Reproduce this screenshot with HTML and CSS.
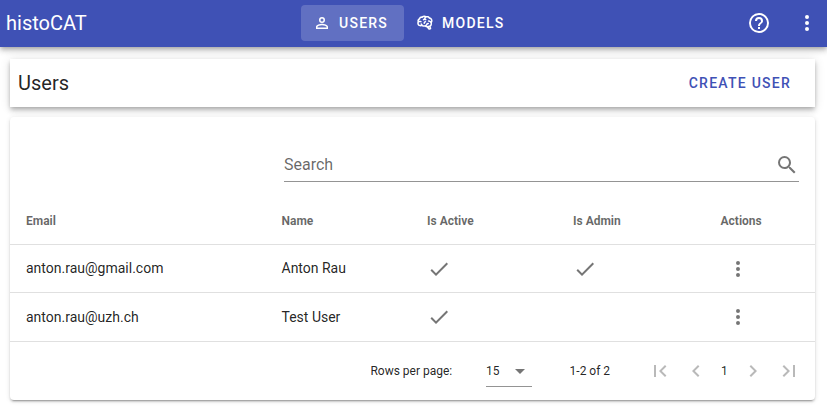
FILE: index.html
```html
<!DOCTYPE html>
<html lang="en">
<head>
<meta charset="utf-8">
<title>histoCAT</title>
<link rel="stylesheet" href="styles.css">
</head>
<body>
<svg width="0" height="0" class="defs">
  <symbol id="check" viewBox="0 0 24 24"><path d="M21,7L9,19L3.5,13.5L4.91,12.09L9,16.17L19.59,5.59L21,7Z"/></symbol>
  <symbol id="dots" viewBox="0 0 24 24"><path d="M12,16A2,2 0 0,1 14,18A2,2 0 0,1 12,20A2,2 0 0,1 10,18A2,2 0 0,1 12,16M12,10A2,2 0 0,1 14,12A2,2 0 0,1 12,14A2,2 0 0,1 10,12A2,2 0 0,1 12,10M12,4A2,2 0 0,1 14,6A2,2 0 0,1 12,8A2,2 0 0,1 10,6A2,2 0 0,1 12,4Z"/></symbol>
</svg>
<header class="app-bar">
  <div class="brand">histoCAT</div>
  <nav class="nav">
    <a class="btn nav-btn active"><svg class="icon small" viewBox="0 0 24 24"><path d="M12,4A4,4 0 0,1 16,8A4,4 0 0,1 12,12A4,4 0 0,1 8,8A4,4 0 0,1 12,4M12,6A2,2 0 0,0 10,8A2,2 0 0,0 12,10A2,2 0 0,0 14,8A2,2 0 0,0 12,6M12,13C14.67,13 20,14.33 20,17V20H4V17C4,14.33 9.33,13 12,13M12,14.9C9.03,14.9 5.9,16.36 5.9,17V18.1H18.1V17C18.1,16.36 14.97,14.9 12,14.9Z"/></svg><span>USERS</span></a>
    <a class="btn nav-btn"><svg class="icon small" viewBox="0 0 24 24"><path d="M21.33,12.91C21.42,14.46 20.71,15.95 19.44,16.86L20.21,18.35C20.44,18.8 20.47,19.33 20.27,19.8C20.08,20.27 19.69,20.64 19.21,20.8L18.42,21.05C18.25,21.11 18.06,21.14 17.88,21.14C17.37,21.14 16.89,20.91 16.56,20.5L14.44,18C13.55,17.85 12.71,17.47 12,16.9C11.5,17.05 11,17.13 10.5,17.13C9.62,17.13 8.74,16.86 8,16.34C7.47,16.5 6.93,16.57 6.38,16.56C5.59,16.57 4.81,16.41 4.08,16.11C2.65,15.47 1.7,14.07 1.65,12.5C1.57,11.78 1.69,11.05 2,10.39C1.71,9.64 1.68,8.82 1.93,8.06C2.3,7.11 3,6.32 3.87,5.82C4.45,4.13 6.08,3 7.87,3.12C9.47,1.62 11.92,1.46 13.7,2.75C14.12,2.64 14.56,2.58 15,2.58C16.36,2.55 17.65,3.15 18.5,4.22C20.54,4.75 22,6.57 22.08,8.69C22.13,9.8 21.83,10.89 21.22,11.82C21.29,12.18 21.33,12.54 21.33,12.91M16.33,11.5C16.9,11.57 17.35,12 17.35,12.57A1,1 0 0,1 16.35,13.57H15.72C15.4,14.47 14.84,15.26 14.1,15.86C14.35,15.95 14.61,16 14.87,16.07C20,16 19.4,12.87 19.4,12.82C19.34,11.39 18.14,10.27 16.71,10.33A1,1 0 0,1 15.71,9.33A1,1 0 0,1 16.71,8.33C17.94,8.36 19.12,8.82 20.04,9.63C20.09,9.34 20.12,9.04 20.12,8.74C20.06,7.5 19.5,6.42 17.25,6.21C16,3.25 12.85,4.89 12.85,5.81V5.81C12.82,6.04 13.06,6.53 13.1,6.56A1,1 0 0,1 14.1,7.56C14.1,8.11 13.65,8.56 13.1,8.56V8.56C12.57,8.54 12.07,8.34 11.67,8C11.19,8.31 10.64,8.5 10.07,8.56V8.56C9.5,8.61 9.03,8.21 9,7.66C8.92,7.1 9.33,6.61 9.88,6.56C10.04,6.54 10.82,6.42 10.82,5.79V5.79C10.82,5.13 11.07,4.5 11.5,4C10.58,3.75 9.59,4.08 8.59,5.29C6.75,5 6,5.25 5.45,7.2C4.5,7.67 4,8 3.78,9C4.86,8.78 5.97,8.87 7,9.25C7.5,9.44 7.78,10 7.59,10.54C7.4,11.06 6.82,11.32 6.3,11.13C5.57,10.81 4.75,10.79 4,11.07C3.68,11.34 3.68,11.9 3.68,12.34C3.68,13.08 4.05,13.77 4.68,14.17C5.21,14.44 5.8,14.58 6.39,14.57C6.24,14.31 6.11,14.04 6,13.76C5.81,13.22 6.1,12.63 6.64,12.44C7.18,12.25 7.77,12.54 7.96,13.08C8.36,14.22 9.38,15 10.58,15.13C11.95,15.06 13.17,14.25 13.77,13C14,11.62 15.11,11.5 16.33,11.5M18.33,18.97L17.71,17.67L17,17.83L18,19.08L18.33,18.97M13.68,10.36C13.7,9.83 13.3,9.38 12.77,9.33C12.06,9.29 11.37,9.53 10.84,10C10.27,10.58 9.97,11.38 10,12.19A1,1 0 0,0 11,13.19C11.57,13.19 12,12.74 12,12.19C12,11.92 12.07,11.65 12.23,11.43C12.35,11.33 12.5,11.28 12.66,11.28C13.21,11.31 13.68,10.9 13.68,10.36Z"/></svg><span>MODELS</span></a>
  </nav>
  <div class="tools">
    <svg class="icon" viewBox="0 0 24 24"><path d="M11,18H13V16H11V18M12,2A10,10 0 0,0 2,12A10,10 0 0,0 12,22A10,10 0 0,0 22,12A10,10 0 0,0 12,2M12,20C7.59,20 4,16.41 4,12C4,7.59 7.59,4 12,4C16.41,4 20,7.59 20,12C20,16.41 16.41,20 12,20M12,6A4,4 0 0,0 8,10H10A2,2 0 0,1 12,8A2,2 0 0,1 14,10C14,12 11,11.75 11,15H13C13,12.75 16,12.5 16,10A4,4 0 0,0 12,6Z"/></svg>
    <svg class="icon"><use href="#dots"/></svg>
  </div>
</header>
<main class="content">
  <section class="title-bar">
    <h1 class="title">Users</h1>
    <a class="btn create">CREATE USER</a>
  </section>
  <section class="card">
    <div class="search">
      <span class="search-label">Search</span>
      <svg class="icon" viewBox="0 0 24 24"><path d="M9.5,3A6.5,6.5 0 0,1 16,9.5C16,11.11 15.41,12.59 14.44,13.73L14.71,14H15.5L20.5,19L19,20.5L14,15.5V14.71L13.73,14.44C12.59,15.41 11.11,16 9.5,16A6.5,6.5 0 0,1 3,9.5A6.5,6.5 0 0,1 9.5,3M9.5,5C7,5 5,7 5,9.5C5,12 7,14 9.5,14C12,14 14,12 14,9.5C14,7 12,5 9.5,5Z"/></svg>
    </div>
    <div class="row head"><span>Email</span><span>Name</span><span>Is Active</span><span>Is Admin</span><span>Actions</span></div>
    <div class="row first"><span>anton.rau@gmail.com</span><span>Anton Rau</span><svg class="icon"><use href="#check"/></svg><svg class="icon"><use href="#check"/></svg><svg class="icon menu"><use href="#dots"/></svg></div>
    <div class="row last"><span>anton.rau@uzh.ch</span><span>Test User</span><svg class="icon"><use href="#check"/></svg><span></span><svg class="icon menu"><use href="#dots"/></svg></div>
    <footer class="pager">
      <span class="per-page">Rows per page:</span>
      <div class="select"><span>15</span><svg class="icon" viewBox="0 0 24 24"><path d="M7,10L12,15L17,10H7Z"/></svg></div>
      <span class="range">1-2 of 2</span>
      <div class="pages">
        <svg class="icon faded" viewBox="0 0 24 24"><path d="M18.41,16.59L13.82,12L18.41,7.41L17,6L11,12L17,18L18.41,16.59M6,6H8V18H6V6Z"/></svg>
        <svg class="icon faded" viewBox="0 0 24 24"><path d="M15.41,16.58L10.83,12L15.41,7.41L14,6L8,12L14,18L15.41,16.58Z"/></svg>
        <span class="page">1</span>
        <svg class="icon faded" viewBox="0 0 24 24"><path d="M8.59,16.58L13.17,12L8.59,7.41L10,6L16,12L10,18L8.59,16.58Z"/></svg>
        <svg class="icon faded" viewBox="0 0 24 24"><path d="M5.59,7.41L10.18,12L5.59,16.59L7,18L13,12L7,6L5.59,7.41M16,6H18V18H16V6Z"/></svg>
      </div>
    </footer>
  </section>
</main>
</body>
</html>
```

FILE: styles.css
```css
* { box-sizing: border-box; }
body { margin: 0; background: #fff; color: rgba(0,0,0,.87); font: 14px/20px Roboto, sans-serif; height: 411px; overflow: hidden; }
.defs { display: none; }
.icon { width: 24px; height: 24px; fill: rgba(0,0,0,.54); flex: none; display: block; }
.small { width: 18px; height: 18px; }
.app-bar { position: relative; z-index: 1; height: 47px; display: grid; grid-template-columns: 301px 1fr auto; align-items: center; padding-bottom: 1px; background: #3f51b5; color: #fff; box-shadow: 0 2px 4px -1px rgba(0,0,0,.2), 0 4px 5px rgba(0,0,0,.14), 0 1px 10px rgba(0,0,0,.12); }
.app-bar .icon { fill: #fff; }
.brand { padding-left: 6px; font-size: 20px; }
.nav { display: flex; }
.btn { font-size: 14px; font-weight: 500; letter-spacing: 1.25px; display: flex; align-items: center; height: 36px; }
.nav-btn { gap: 8px; padding: 0 16px 0 12px; border-radius: 4px; }
.nav-btn.active { background: rgba(255,255,255,.18); }
.tools { display: flex; gap: 24px; padding-right: 8px; }
.content { padding: 12px 12px 0 10px; }
.title-bar { height: 48px; display: flex; align-items: center; justify-content: space-between; padding: 0 24px 0 8px; background: #fff; box-shadow: 0 2px 4px -1px rgba(0,0,0,.2), 0 4px 5px rgba(0,0,0,.14), 0 1px 10px rgba(0,0,0,.12); }
.title { margin: 0; font-size: 20px; font-weight: 400; }
.create { color: #3f51b5; }
.card { height: 283px; margin-top: 10px; padding-top: 32px; background: #fff; border-radius: 4px; position: relative; box-shadow: 0 3px 1px -2px rgba(0,0,0,.2), 0 2px 2px rgba(0,0,0,.14), 0 1px 5px rgba(0,0,0,.12); }
.search { margin: 0 16px 0 274px; height: 33px; display: flex; justify-content: space-between; align-items: center; border-bottom: 1px solid rgba(0,0,0,.42); }
.search-label { font-size: 16px; color: rgba(0,0,0,.6); }
.row { display: grid; grid-template-columns: 255.5px 145.5px 146px 147.5px 1fr; align-items: center; height: 48px; padding-left: 16px; border-bottom: 1px solid rgba(0,0,0,.12); }
.row.head { height: 63px; padding-top: 15px; font-size: 12px; font-weight: 700; color: rgba(0,0,0,.6); }
.row.first span { padding-bottom: 2px; }
.row.last { height: 49px; }
.menu { margin-left: 5.5px; }
.pager { display: flex; align-items: center; height: 58px; font-size: 12px; padding-left: 360.4px; }
.per-page { width: 115.6px; }
.select { width: 46px; height: 32px; display: flex; align-items: center; justify-content: space-between; border-bottom: 1px solid rgba(0,0,0,.42); }
.range { width: 116px; padding-left: 37.6px; white-space: nowrap; }
.pages { display: flex; align-items: center; gap: 12px; }
.page { width: 9px; text-align: center; }
.faded { opacity: .5; }
```
